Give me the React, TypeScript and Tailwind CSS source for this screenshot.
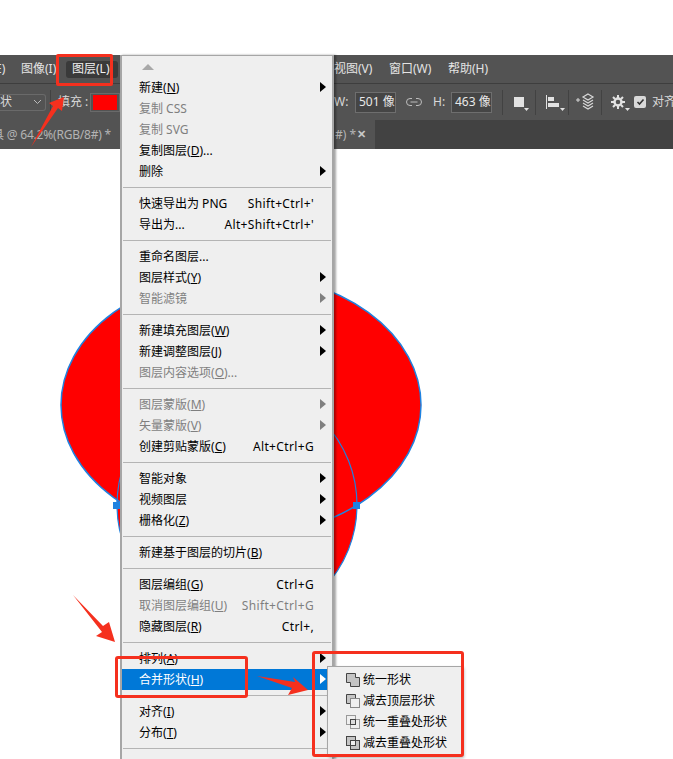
const font = "font-['Noto_Sans','Noto_Sans_CJK_SC',sans-serif]";

type Row = { label: string; key?: string; shortcut?: string; suffix?: string; off?: boolean; arrow?: boolean; active?: boolean };

const sections: Row[][] = [
  [
    { label: "新建", key: "N", arrow: true },
    { label: "复制 CSS", off: true },
    { label: "复制 SVG", off: true },
    { label: "复制图层", key: "D", suffix: "..." },
    { label: "删除", arrow: true },
  ],
  [
    { label: "快速导出为 PNG", shortcut: "Shift+Ctrl+'" },
    { label: "导出为...", shortcut: "Alt+Shift+Ctrl+'" },
  ],
  [
    { label: "重命名图层..." },
    { label: "图层样式", key: "Y", arrow: true },
    { label: "智能滤镜", off: true, arrow: true },
  ],
  [
    { label: "新建填充图层", key: "W", arrow: true },
    { label: "新建调整图层", key: "J", arrow: true },
    { label: "图层内容选项", key: "O", suffix: "...", off: true },
  ],
  [
    { label: "图层蒙版", key: "M", off: true, arrow: true },
    { label: "矢量蒙版", key: "V", off: true, arrow: true },
    { label: "创建剪贴蒙版", key: "C", shortcut: "Alt+Ctrl+G" },
  ],
  [
    { label: "智能对象", arrow: true },
    { label: "视频图层", arrow: true },
    { label: "栅格化", key: "Z", arrow: true },
  ],
  [{ label: "新建基于图层的切片", key: "B" }],
  [
    { label: "图层编组", key: "G", shortcut: "Ctrl+G" },
    { label: "取消图层编组", key: "U", shortcut: "Shift+Ctrl+G", off: true },
    { label: "隐藏图层", key: "R", shortcut: "Ctrl+," },
  ],
  [
    { label: "排列", key: "A", arrow: true },
    { label: "合并形状", key: "H", arrow: true, active: true },
  ],
  [
    { label: "对齐", key: "I", arrow: true },
    { label: "分布", key: "T", arrow: true },
  ],
];

function MenuRow({ row }: { row: Row }) {
  const color = row.active ? "bg-[#0078d7] text-white" : row.off ? "text-[#7f7f7f]" : "text-black";
  return (
    <div className={`relative flex h-[21px] items-center pl-[17px] pr-[18px] text-[12px] leading-[21px] ${color}`}>
      <span className="whitespace-nowrap">
        {row.label}
        {row.key && (
          <>
            (<span className="underline">{row.key}</span>)
          </>
        )}
        {row.suffix}
      </span>
      {row.shortcut && <span className="ml-auto whitespace-nowrap tracking-[0.35px]">{row.shortcut}</span>}
      {row.arrow && (
        <span
          className={`absolute right-[6px] top-[5px] h-0 w-0 border-y-[5px] border-l-[6px] border-y-transparent ${
            row.active ? "border-l-white" : row.off ? "border-l-[#7f7f7f]" : "border-l-black"
          }`}
        />
      )}
    </div>
  );
}

function ShapeIcon({ kind }: { kind: number }) {
  if (kind === 0)
    return (
      <svg width="16" height="16" viewBox="0 0 16 16">
        <path d="M1.5 1.5h9v4h4v9h-9v-4h-4z" fill="#c4c4c4" stroke="#444" />
      </svg>
    );
  if (kind === 1)
    return (
      <svg width="16" height="16" viewBox="0 0 16 16">
        <path d="M1.5 1.5h9v4h-5v5h-4z" fill="#c4c4c4" stroke="#444" />
        <rect x="5.5" y="5.5" width="9" height="9" fill="#f0f0f0" stroke="#888" />
      </svg>
    );
  if (kind === 2)
    return (
      <svg width="16" height="16" viewBox="0 0 16 16">
        <rect x="1.5" y="1.5" width="9" height="9" fill="none" stroke="#999" />
        <rect x="5.5" y="5.5" width="9" height="9" fill="none" stroke="#999" />
        <rect x="5.5" y="5.5" width="5" height="5" fill="#ddd" stroke="#444" />
      </svg>
    );
  return (
    <svg width="16" height="16" viewBox="0 0 16 16">
      <rect x="1.5" y="1.5" width="9" height="9" fill="#c4c4c4" stroke="#444" />
      <rect x="5.5" y="5.5" width="9" height="9" fill="#c4c4c4" stroke="#444" />
      <rect x="5.5" y="5.5" width="5" height="5" fill="#f0f0f0" stroke="#444" />
    </svg>
  );
}

function Caret() {
  return (
    <svg className="mt-[15px] shrink-0" width="5" height="3" viewBox="0 0 5 3">
      <path d="M0 0h5L2.5 3z" fill="#e2e2e2" />
    </svg>
  );
}

function ToolSep({ className }: { className: string }) {
  return <div className={`h-[25px] w-px shrink-0 bg-[#424242] ${className}`} />;
}

export default function App() {
  return (
    <div className={`relative h-[759px] w-[673px] overflow-hidden bg-white ${font}`}>
      <div className="h-[55px]" />

      {/* menu bar */}
      <div className="flex h-[29px] items-center border-b border-[#3e3e3e] bg-[#535353] text-[12px] text-[#e4e4e4]">
        <span className="ml-[-5px] w-[26px] shrink-0 whitespace-nowrap">E)</span>
        <span className="w-[45px] shrink-0 overflow-hidden whitespace-nowrap">图像(I)</span>
        <span className="flex h-[17px] w-[52px] shrink-0 items-center overflow-hidden whitespace-nowrap rounded-[3px] bg-[#3a3a3a] pl-[6px] text-[#f0f0f0]">图层(L)</span>
        <span className="ml-[216px] w-[55px] shrink-0 whitespace-nowrap">视图(V)</span>
        <span className="w-[59px] shrink-0 whitespace-nowrap">窗口(W)</span>
        <span className="whitespace-nowrap">帮助(H)</span>
      </div>

      {/* options bar */}
      <div className="flex h-[36px] items-center bg-[#535353] text-[12px] text-[#d8d8d8]">
        <div className="flex h-[17px] w-[46px] shrink-0 items-center justify-between overflow-hidden rounded-r-[3px] border border-l-0 border-[#6a6a6a] pr-[3px]">
          <span>状</span>
          <svg width="9" height="6" viewBox="0 0 9 6"><path d="M1 1l3.5 3.5L8 1" fill="none" stroke="#bbb" /></svg>
        </div>
        <ToolSep className="ml-[4px]" />
        <span className="ml-[7px] w-[32px] shrink-0 whitespace-nowrap">填充 :</span>
        <div className="h-[19px] w-[30px] shrink-0 border border-[#6a6a6a] py-px pl-[2px]">
          <div className="h-full w-[24px] bg-[#ff0000]" />
        </div>
        <span className="ml-[214px] w-[21px] shrink-0">W:</span>
        <div className="flex h-[21px] w-[41px] shrink-0 items-center overflow-hidden whitespace-nowrap border border-[#6e6e6e] bg-[#454545] pl-[3px] text-[#e8e8e8]">501 像</div>
        <svg className="ml-[10px] shrink-0" width="16" height="10" viewBox="0 0 16 10">
          <path d="M6 1.5H4a3.5 3.5 0 0 0 0 7h2M10 1.5h2a3.5 3.5 0 0 1 0 7h-2M4.5 5h7" fill="none" stroke="#bdbdbd" />
        </svg>
        <span className="ml-[11px] w-[18px] shrink-0">H:</span>
        <div className="flex h-[21px] w-[41px] shrink-0 items-center overflow-hidden whitespace-nowrap border border-[#6e6e6e] bg-[#454545] pl-[3px] text-[#e8e8e8]">463 像</div>
        <ToolSep className="ml-[10px]" />
        <div className="ml-[11px] h-[10px] w-[10px] shrink-0 bg-[#e2e2e2]" />
        <Caret />
        <ToolSep className="ml-[6px]" />
        <svg className="ml-[10px] shrink-0" width="14" height="14" viewBox="0 0 14 14">
          <path d="M.5 0v14" stroke="#e2e2e2" />
          <path d="M2 2h6v4H2zM2 8h11v4H2z" fill="#e2e2e2" />
        </svg>
        <Caret />
        <ToolSep className="ml-[3px]" />
        <svg className="ml-[7px] shrink-0" width="20" height="18" viewBox="0 0 20 18">
          <path d="M0 7h4M2 5v4" stroke="#d8d8d8" />
          <path d="M12 1l5 3-5 3-5-3zM7 7l5 3 5-3M7 10l5 3 5-3M7 13l5 3 5-3" fill="none" stroke="#d8d8d8" strokeWidth="1.2" />
        </svg>
        <ToolSep className="ml-[5px]" />
        <svg className="ml-[9px] shrink-0" width="14" height="14" viewBox="0 0 14 14">
          <circle cx="7" cy="7" r="3.5" fill="none" stroke="#e2e2e2" strokeWidth="2.4" />
          <path d="M7 0v3M7 11v3M0 7h3M11 7h3M2 2l2 2M10 10l2 2M12 2l-2 2M4 10l-2 2" stroke="#e2e2e2" strokeWidth="2" />
        </svg>
        <Caret />
        <div className="ml-[4px] flex h-[12px] w-[12px] shrink-0 items-center justify-center rounded-[2px] bg-[#d8d8d8]">
          <svg width="9" height="8" viewBox="0 0 9 8"><path d="M1.5 4l2 2 4-4.5" fill="none" stroke="#333" strokeWidth="1.6" /></svg>
        </div>
        <span className="ml-[6px] whitespace-nowrap">对齐</span>
      </div>

      {/* tab bar */}
      <div className="flex h-[29px] bg-[#424242] text-[12px] text-[#b4b4b4]">
        <div className="flex w-[375px] items-center bg-[#535353]">
          <span className="ml-[-8px] w-[343px] shrink-0 whitespace-nowrap tracking-[-0.2px]">具 @ 64.2%(RGB/8#) *</span>
          <span className="w-[22px] shrink-0 whitespace-nowrap text-right pr-[6px]">#) *</span>
          <span className="text-[11px] font-bold text-[#c8c8c8]">✕</span>
        </div>
      </div>

      {/* canvas */}
      <svg className="block" width="673" height="610" viewBox="0 149 673 610">
        <circle cx="237" cy="505" r="120" fill="#ff0000" stroke="#1e82e0" strokeWidth="1.2" />
        <ellipse cx="241" cy="405" rx="180" ry="131" fill="#ff0000" stroke="#1e82e0" strokeWidth="1.5" />
        <path d="M117 505A120 120 0 0 1 357 505" fill="none" stroke="#1e82e0" strokeWidth="1.2" />
        <rect x="113" y="502" width="7" height="7" fill="#1e82e0" />
        <rect x="353" y="502" width="7" height="7" fill="#1e82e0" />
      </svg>

      {/* layer menu */}
      <div className="absolute left-[120px] top-[55px] h-[704px] w-[214px] border-x-2 border-t border-x-[#a6a6a6] border-t-[#a6a6a6] bg-[#efefef] shadow-[2px_0_2px_rgba(0,0,0,0.35)]">
        <div className="flex h-[21px] items-center pl-[20px] pt-[1px]">
          <span className="h-0 w-0 border-x-[6px] border-b-[6px] border-x-transparent border-b-[#a8a8a8]" />
        </div>
        {sections.map((rows, i) => (
          <div key={i}>
            {rows.map((row) => (
              <MenuRow key={row.label} row={row} />
            ))}
            <div className="flex h-[11px] items-center px-[1px]">
              <div className="h-px w-full bg-[#b4b4b4]" />
            </div>
          </div>
        ))}
      </div>

      {/* submenu */}
      <div className="absolute left-[327px] top-[666px] w-[135px] border border-[#a6a6a6] bg-[#efefef] py-[2px] pl-[17px] text-[12px] text-black shadow-[2px_2px_3px_rgba(0,0,0,0.3)]">
        {["统一形状", "减去顶层形状", "统一重叠处形状", "减去重叠处形状"].map((label, i) => (
          <div key={label} className="flex h-[21px] items-center gap-[2px]">
            <ShapeIcon kind={i} />
            <span className="whitespace-nowrap">{label}</span>
          </div>
        ))}
      </div>

      {/* red annotations */}
      <div className="absolute left-[56px] top-[54px] h-[32px] w-[57px] rounded-[2px] border-[3px] border-[#f5301e]" />
      <div className="absolute left-[115px] top-[656px] h-[42px] w-[133px] rounded-[3px] border-[3px] border-[#f5301e]" />
      <div className="absolute left-[312px] top-[651px] h-[106px] w-[152px] rounded-[3px] border-[3px] border-[#f5301e]" />
      <svg className="absolute left-0 top-0" width="673" height="759" viewBox="0 0 673 759">
        <path d="M31 147L53 106 49 103 64 97 62 111 58 108z" fill="#f5301e" />
        <path d="M73 595L103 626 109 622 115 642 96 636 102 632z" fill="#f5301e" />
        <path d="M257 676L295 682 293 677 308 690 288 695 292 688z" fill="#f5301e" />
      </svg>
    </div>
  );
}
